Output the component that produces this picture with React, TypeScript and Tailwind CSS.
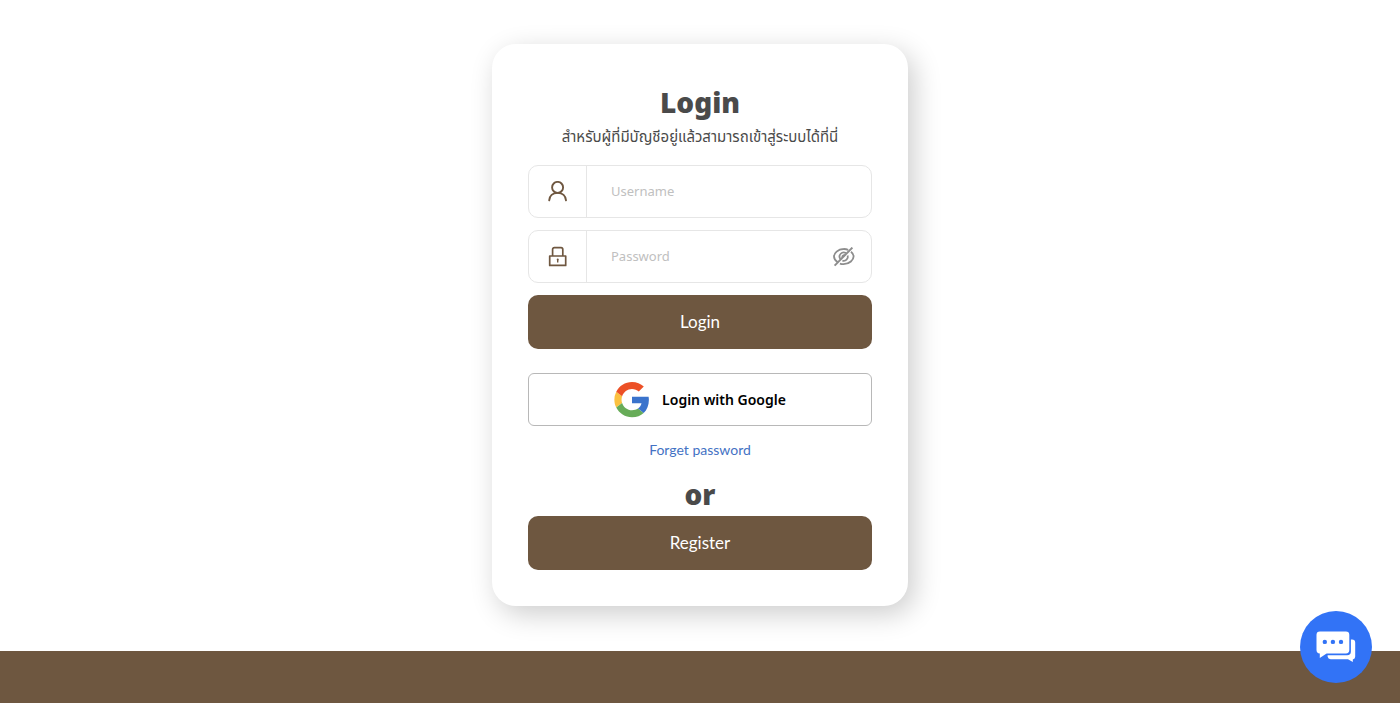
import { useState } from 'react';

function UserIcon() {
    return (
        <svg width="20" height="22" viewBox="0 0 20 22" fill="none" stroke="#6f5740" strokeWidth="1.9" strokeLinecap="round" aria-hidden="true">
            <circle cx="9.6" cy="6.4" r="5.5" />
            <path d="M1.2 19.4C1.5 15 4.6 11.9 9.6 11.9s8.1 3.1 8.4 7.5" />
        </svg>
    );
}

function LockIcon() {
    return (
        <svg width="20" height="22" viewBox="0 0 20 22" fill="none" stroke="#6f5740" strokeWidth="1.7" strokeLinejoin="round" aria-hidden="true">
            <path d="M4.6 10V3.4a1.8 1.8 0 0 1 1.8-1.8h6.6a1.8 1.8 0 0 1 1.8 1.8V10" />
            <rect x="1.7" y="10" width="16" height="9.4" />
            <path d="M9.7 13.4v3" strokeWidth="1.4" />
            <circle cx="9.7" cy="13.5" r="1" fill="#6f5740" stroke="none" />
        </svg>
    );
}

function EyeOffIcon() {
    return (
        <svg width="22" height="20" viewBox="0 0 22 20" fill="none" stroke="#8d8d8d" strokeWidth="1.8" aria-hidden="true">
            <path d="M15.2 2.8A11.5 11.5 0 0 0 10.6 2C4.8 2 1 6.6 1 9.6c0 2 1.4 4.2 3.7 5.7" />
            <path d="M18 4.7c1.7 1.4 2.6 3.3 2.6 4.9 0 3-3.9 7.6-10 7.6-1.3 0-2.6-.2-3.7-.6" />
            <path d="M12.9 6.1A4.1 4.1 0 0 0 7.4 12" />
            <path d="M14.7 8.6A4.1 4.1 0 0 1 9.4 13.6" />
            <path d="M12 8.6a1.6 1.6 0 0 0-2.4 2" />
            <path d="M1.6 18.6 19.4.6" strokeWidth="2" />
        </svg>
    );
}

function GoogleLogo() {
    return (
        <svg width="36" height="36" viewBox="-.5 0 49 49" aria-hidden="true">
            <path fill="#FBC140" d="M10.53 28.59A14.5 14.5 0 0 1 9.77 24c0-1.6.27-3.14.76-4.59l-7.98-6.19A23.9 23.9 0 0 0 0 24c0 3.88.92 7.54 2.56 10.78z" />
            <path fill="#EC5026" d="M24 9.5c3.54 0 6.71 1.22 9.21 3.6l6.85-6.85C35.9 2.38 30.47 0 24 0 14.62 0 6.51 5.38 2.56 13.22l7.98 6.19C12.43 13.72 17.74 9.5 24 9.5" />
            <path fill="#67AC58" d="M24 48c6.48 0 11.93-2.13 15.89-5.81l-7.73-6c-2.15 1.45-4.92 2.3-8.16 2.3-6.26 0-11.57-4.22-13.47-9.91l-7.98 6.19C6.51 42.62 14.62 48 24 48" />
            <path fill="#3A73CC" d="M46.98 24.55c0-1.57-.15-3.09-.38-4.55H24v9.02h12.94c-.58 2.96-2.26 5.48-4.78 7.18l7.73 6c4.51-4.18 7.09-10.36 7.09-17.65" />
        </svg>
    );
}

function ChatIcon() {
    return (
        <svg width="40" height="32" viewBox="0 0 40 32" fill="white" aria-hidden="true">
            <path d="M34.9 8.4H36a3.2 3.2 0 0 1 3.2 3.2v14a2.8 2.8 0 0 1-2.4 2.8V31L32 28.2H14.7a3.1 3.1 0 0 1-3.1-2.6V24.2H31.1a3.8 3.8 0 0 0 3.8-3.8z" />
            <path d="M3.9.4h26a3.4 3.4 0 0 1 3.4 3.4v15.2a3.4 3.4 0 0 1-3.4 3.4H10.6L3.8 27v-4.6A3.4 3.4 0 0 1 .5 19V3.8A3.4 3.4 0 0 1 3.9.4" />
            <g fill="#3273f6">
                <circle cx="8.8" cy="10.9" r="2.2" />
                <circle cx="16.9" cy="10.9" r="2.2" />
                <circle cx="25" cy="10.9" r="2.2" />
            </g>
        </svg>
    );
}

const fieldClass = 'flex h-[53px] overflow-hidden rounded-[10px] border border-[#e6e6e6]';
const fieldIconClass = 'flex w-[58px] shrink-0 items-center justify-center border-r border-[#e6e6e6]';
const inputClass = 'min-w-0 flex-1 px-6 text-[13px] text-[#4a4a4a] outline-none placeholder:text-[#c0c0c0]';
const primaryClass = "h-[54px] w-full rounded-[10px] bg-[#6e5740] font-['Lato','Noto_Sans',sans-serif] text-[17px] text-white hover:bg-[#5f4a36]";

export default function App() {
    const [username, setUsername] = useState('');
    const [password, setPassword] = useState('');
    const [showPassword, setShowPassword] = useState(false);

    return (
        <div className="flex min-h-screen flex-col bg-white font-['Noto_Sans','Noto_Sans_Thai',sans-serif]">
            <main className="flex flex-1 justify-center px-4 pt-11 pb-[45px]">
                <div className="w-full max-w-[416px] rounded-3xl bg-white px-9 pt-10 pb-[35px] shadow-[6px_8px_28px_rgba(0,0,0,0.2)]">
                    <h1 className="text-center text-[28px] leading-9 font-black text-[#4a4a4a]">Login</h1>
                    <p className="text-center text-[15px] leading-8 text-[#4a4a4a]">สำหรับผู้ที่มีบัญชีอยู่แล้วสามารถเข้าสู่ระบบได้ที่นี่</p>

                    <form className="mt-[13px] flex flex-col gap-3" onSubmit={(e) => e.preventDefault()}>
                        <div className={fieldClass}>
                            <label htmlFor="username" aria-label="Username" className={fieldIconClass}>
                                <UserIcon />
                            </label>
                            <input
                                id="username"
                                type="text"
                                placeholder="Username"
                                value={username}
                                onChange={(e) => setUsername(e.target.value)}
                                className={inputClass}
                            />
                        </div>
                        <div className={fieldClass}>
                            <label htmlFor="password" aria-label="Password" className={fieldIconClass}>
                                <LockIcon />
                            </label>
                            <input
                                id="password"
                                type={showPassword ? 'text' : 'password'}
                                placeholder="Password"
                                value={password}
                                onChange={(e) => setPassword(e.target.value)}
                                className={inputClass}
                            />
                            <button
                                type="button"
                                aria-label="Show password"
                                onClick={() => setShowPassword(!showPassword)}
                                className="px-4"
                            >
                                <EyeOffIcon />
                            </button>
                        </div>
                        <button type="submit" className={primaryClass}>
                            Login
                        </button>
                    </form>

                    <button
                        type="button"
                        className="mt-6 flex h-[53px] w-full items-center justify-center gap-3 rounded-md border border-[#b8b8b8] text-sm font-semibold text-black hover:bg-gray-50"
                    >
                        <GoogleLogo />
                        Login with Google
                    </button>

                    <div className="mt-3 text-center font-['Lato','Noto_Sans',sans-serif] text-sm leading-6">
                        <a href="#forget" className="text-[#4472c4] hover:underline">
                            Forget password
                        </a>
                    </div>

                    <h2 className="mt-[14px] mb-1 text-center text-[28px] leading-9 font-black text-[#4a4a4a]">or</h2>
                    <button type="button" className={primaryClass}>
                        Register
                    </button>
                </div>
            </main>

            <footer className="h-[52px] bg-[#6e5740]" />

            <button
                type="button"
                aria-label="Chat"
                className="fixed right-7 bottom-5 flex size-18 items-center justify-center rounded-full bg-[#3273f6]"
            >
                <ChatIcon />
            </button>
        </div>
    );
}
